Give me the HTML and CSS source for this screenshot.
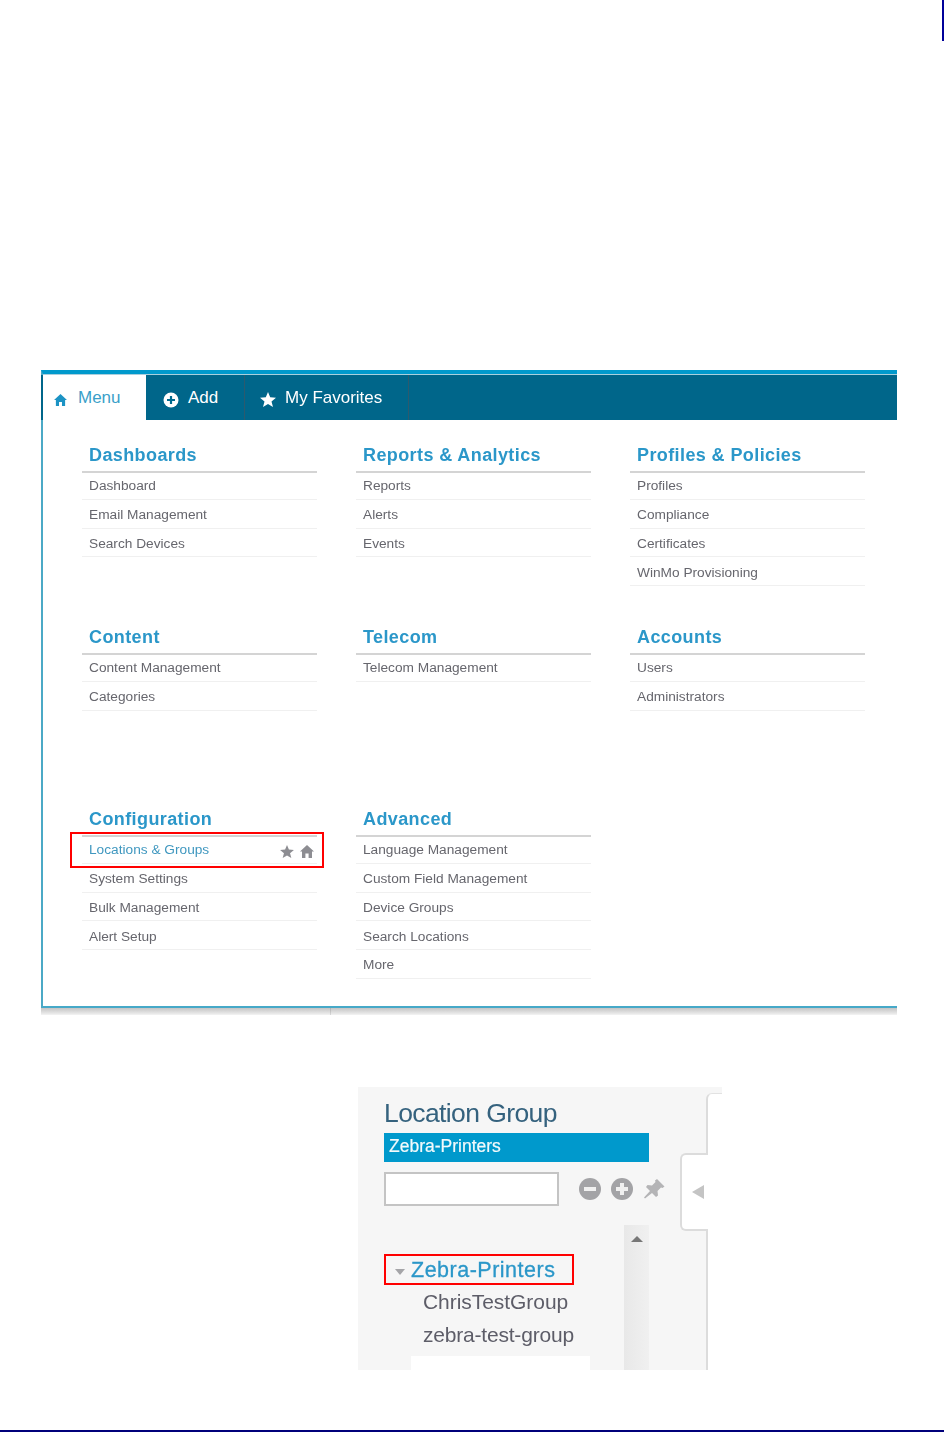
FILE: index.html
```html
<!DOCTYPE html>
<html lang="en">
<head>
  <meta charset="UTF-8">
  <title>Locations and Groups</title>
  <link rel="stylesheet" href="styles.css">
</head>
<body>
  <svg width="0" height="0" class="defs">
    <symbol id="home" viewBox="0 0 14 13"><path d="M7 0 L14 6.6 L12 6.6 L12 13 L8.6 13 L8.6 8.6 L5.4 8.6 L5.4 13 L2 13 L2 6.6 L0 6.6 Z"/></symbol>
    <symbol id="star" viewBox="0 0 16 15"><polygon points="8,0 10.2,5.3 16,5.7 11.5,9.4 13,15 8,12 3,15 4.5,9.4 0,5.7 5.8,5.3"/></symbol>
  </svg>

  <div class="page-mark"></div>

  <div class="menu">
    <div class="tabs">
      <a class="tab tab-menu"><svg class="ico-home"><use href="#home"/></svg>Menu</a>
      <a class="tab tab-add">
        <svg class="ico-add" viewBox="0 0 16 16"><circle cx="8" cy="8" r="7.5" fill="#fff"/><path d="M4 8h8M8 4v8" stroke="#006a8e" stroke-width="2.2"/></svg>Add
      </a>
      <a class="tab tab-fav"><svg class="ico-star"><use href="#star"/></svg>My Favorites</a>
    </div>
    <div class="groups">
      <section class="group">
        <h2>Dashboards</h2>
        <ul>
          <li>Dashboard</li>
          <li>Email Management</li>
          <li>Search Devices</li>
        </ul>
      </section>
      <section class="group">
        <h2>Reports &amp; Analytics</h2>
        <ul>
          <li>Reports</li>
          <li>Alerts</li>
          <li>Events</li>
        </ul>
      </section>
      <section class="group">
        <h2>Profiles &amp; Policies</h2>
        <ul>
          <li>Profiles</li>
          <li>Compliance</li>
          <li>Certificates</li>
          <li>WinMo Provisioning</li>
        </ul>
      </section>
      <section class="group">
        <h2>Content</h2>
        <ul>
          <li>Content Management</li>
          <li>Categories</li>
        </ul>
      </section>
      <section class="group">
        <h2>Telecom</h2>
        <ul>
          <li>Telecom Management</li>
        </ul>
      </section>
      <section class="group">
        <h2>Accounts</h2>
        <ul>
          <li>Users</li>
          <li>Administrators</li>
        </ul>
      </section>
      <section class="group">
        <h2>Configuration</h2>
        <ul>
          <li class="active">
            <span>Locations &amp; Groups</span>
            <span class="row-icons">
              <svg class="ico-row-star"><use href="#star"/></svg>
              <svg class="ico-row-home"><use href="#home"/></svg>
            </span>
            <i class="callout"></i>
          </li>
          <li>System Settings</li>
          <li>Bulk Management</li>
          <li>Alert Setup</li>
        </ul>
      </section>
      <section class="group">
        <h2>Advanced</h2>
        <ul>
          <li>Language Management</li>
          <li>Custom Field Management</li>
          <li>Device Groups</li>
          <li>Search Locations</li>
          <li>More</li>
        </ul>
      </section>
    </div>
  </div>
  <div class="menu-shadow"></div>

  <div class="loc">
    <div class="loc-side">
      <h1>Location Group</h1>
      <div class="loc-current">Zebra-Printers</div>
      <div class="loc-tools">
        <input class="loc-input" type="text">
        <svg class="tool" viewBox="0 0 22 22"><circle cx="11" cy="11" r="11" fill="#a3a3a6"/><rect x="5" y="9" width="12" height="4" fill="#f0f0f0"/></svg>
        <svg class="tool" viewBox="0 0 22 22"><circle cx="11" cy="11" r="11" fill="#a3a3a6"/><path d="M5 11h12M11 5v12" stroke="#f0f0f0" stroke-width="4"/></svg>
        <svg class="tool" viewBox="0 0 22 22"><path d="M14 1 L21.5 8.5 L19.5 10 L18 9.4 L14.5 13 L15 17.5 L13 19 L9 15 L2 20.5 L1 19.5 L7 13 L3 9 L4.5 7 L9 7.6 L12.5 4 L12 2.5 Z" fill="#b4b4b6"/></svg>
      </div>
      <div class="loc-body">
        <div class="tree">
          <div class="tree-root"><i class="caret"></i>Zebra-Printers</div>
          <div class="tree-item">ChrisTestGroup</div>
          <div class="tree-item tree-item-lc">zebra-test-group</div>
          <div class="tree-blank"></div>
        </div>
        <div class="scroll"><i class="scroll-up"></i></div>
      </div>
    </div>
    <div class="loc-main"></div>
    <div class="loc-toggle"><i class="toggle-arrow"></i></div>
  </div>

  <div class="page-rule"></div>
</body>
</html>
```
FILE: styles.css
```css
*{
  margin: 0;
  padding: 0;
  box-sizing: border-box;
}
body{
  height: 1432px;
  background: #fff;
  font-family: "Liberation Sans", Arial, sans-serif;
  display: flex;
  flex-direction: column;
  overflow: hidden;
}
.defs{
  position: absolute;
}
ul{
  list-style: none;
}
.page-mark{
  width: 2px;
  height: 41px;
  background: #00009a;
  align-self: flex-end;
}
.page-rule{
  height: 2px;
  margin-top: auto;
  background: #00007a;
}

/* menu */
.menu{
  width: 856px;
  height: 638px;
  margin: 329px 0 0 41px;
  border-top: 4px solid #0099cc;
  border-left: 2px solid #4ba9c6;
  border-bottom: 2px solid #46a9c8;
  filter: blur(.35px);
}
.tabs{
  height: 46px;
  display: flex;
  background: #00668a;
  border-top: 1px solid #a9cfdd;
}
.tab{
  display: flex;
  align-items: center;
  height: 45px;
  padding-top: 1px;
  font-size: 17px;
  color: #fff;
  border-right: 1px solid #2c5a6e;
}
.tab-menu{
  width: 103px;
  padding-left: 11px;
  background: #fff;
  color: #3a9fc9;
  border-right: 0;
  box-shadow: -2px 0 0 #00668a;
}
.tab-add{
  width: 99px;
  padding-left: 17px;
}
.tab-fav{
  width: 164px;
  padding-left: 15px;
}
.ico-home{
  width: 13px;
  height: 12px;
  margin: 3px 11px 0 0;
  fill: #1c93c4;
}
.ico-add{
  width: 16px;
  height: 16px;
  margin: 3px 9px 0 0;
}
.ico-star{
  width: 16px;
  height: 15px;
  margin: 3px 9px 0 0;
  fill: #fff;
}
.groups{
  display: grid;
  grid-template-columns: repeat(3, 235px);
  grid-auto-rows: 182px;
  column-gap: 39px;
  padding: 20px 0 0 39px;
}
.group h2{
  height: 33px;
  margin-bottom: -2px;
  padding-left: 7px;
  border-bottom: 2px solid #d4d4d4;
  font-size: 18px;
  line-height: 31px;
  letter-spacing: .4px;
  color: #2b97c9;
}
.group li{
  height: 28.75px;
  padding: 2px 7px 0;
  display: flex;
  align-items: center;
  justify-content: space-between;
  border-bottom: 1px solid #f0f0f0;
  font-size: 13.7px;
  color: #66666d;
}
.group li.active{
  position: relative;
  color: #3f97bf;
}
.row-icons{
  display: flex;
  gap: 6px;
  margin: 3px -4px 0 0;
  fill: #8d8d92;
}
.ico-row-star{
  width: 14px;
  height: 13px;
}
.ico-row-home{
  width: 14px;
  height: 13px;
}
.callout{
  position: absolute;
  left: -12px;
  top: -3px;
  width: 254px;
  height: 36px;
  border: 2px solid #f00;
}
.menu-shadow{
  width: 856px;
  height: 7px;
  margin-left: 41px;
  background:
    linear-gradient(#b0b0b0, #d8d8d8) 289px 0 / 1px 100% no-repeat,
    linear-gradient(#c4c4c4, #e6e6e6 75%, #f4f4f4);
}

/* location group */
.loc{
  position: relative;
  display: flex;
  width: 364px;
  height: 283px;
  margin: 72px 0 0 358px;
  background: #f6f6f6;
  filter: blur(.3px);
}
.loc-side{
  width: 348px;
  padding: 10px 0 0 26px;
}
.loc-side h1{
  font-size: 26.5px;
  font-weight: normal;
  line-height: 32px;
  letter-spacing: -.6px;
  color: #35627e;
}
.loc-current{
  width: 265px;
  height: 29px;
  margin-top: 4px;
  padding-left: 5px;
  background: #0099cc;
  color: #f3fafc;
  font-size: 17.5px;
  line-height: 27px;
  -webkit-text-stroke: .2px #f3fafc;
}
.loc-tools{
  display: flex;
  align-items: center;
  gap: 10px;
  margin-top: 10px;
}
.loc-input{
  width: 175px;
  height: 34px;
  margin-right: 10px;
  background: #fff;
  border: 2px solid #c4c4c4;
  outline: 0;
}
.tool{
  width: 22px;
  height: 22px;
}
.loc-body{
  display: flex;
  justify-content: space-between;
  width: 265px;
  margin-top: 19px;
}
.tree{
  padding-top: 29px;
}
.tree-root{
  position: relative;
  width: 190px;
  height: 31px;
  padding: 2px 0 0 9px;
  display: flex;
  align-items: center;
  gap: 6px;
  border: 2px solid #f00;
  font-size: 21.5px;
  letter-spacing: .5px;
  color: #2b97c9;
  -webkit-text-stroke: .3px #2b97c9;
}
.caret{
  width: 0;
  height: 0;
  margin-top: 3px;
  border-top: 6px solid #a5a5a8;
  border-left: 5px solid transparent;
  border-right: 5px solid transparent;
}
.tree-item{
  height: 33px;
  padding-left: 39px;
  font-size: 21px;
  line-height: 34px;
  letter-spacing: -.05px;
  color: #5d5d68;
}
.tree-item-lc{
  letter-spacing: -.2px;
}
.tree-blank{
  width: 179px;
  height: 14px;
  margin: 5px 0 0 27px;
  background: #fff;
}
.scroll{
  width: 25px;
  display: flex;
  justify-content: center;
  padding-top: 11px;
  background: linear-gradient(90deg, #e8e8e8, #f0f0f0);
}
.scroll-up{
  width: 0;
  height: 0;
  border-bottom: 6px solid #777;
  border-left: 6px solid transparent;
  border-right: 6px solid transparent;
}
.loc-main{
  flex: 1;
  margin-top: 6px;
  background: #fff;
  border-left: 2px solid #dcdcdc;
  border-top: 1px solid #e2e2e2;
  border-top-left-radius: 6px;
}
.loc-toggle{
  position: absolute;
  left: 322px;
  top: 66px;
  width: 28px;
  height: 78px;
  display: flex;
  align-items: center;
  padding-left: 10px;
  background: #fff;
  border: 2px solid #dcdcdc;
  border-right: 0;
  border-radius: 6px 0 0 6px;
}
.toggle-arrow{
  width: 0;
  height: 0;
  border-right: 12px solid #c4c4c4;
  border-top: 7px solid transparent;
  border-bottom: 7px solid transparent;
}
```
